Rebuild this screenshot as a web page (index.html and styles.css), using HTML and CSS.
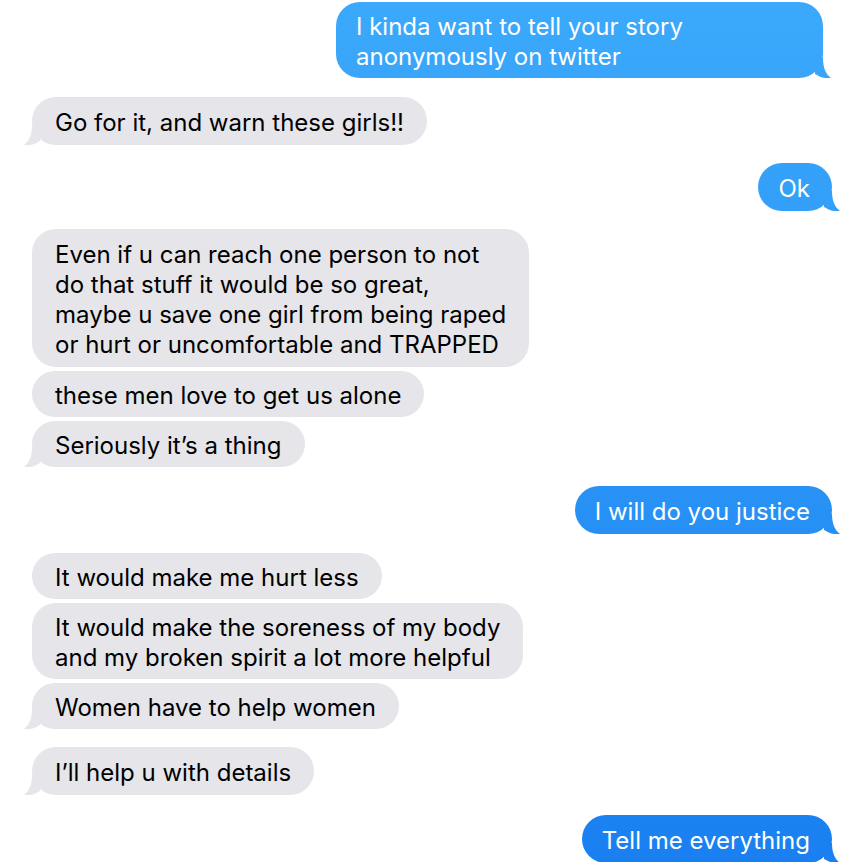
FILE: index.html
```html
<!DOCTYPE html>
<html>
<head>
<meta charset="utf-8">
<link rel="stylesheet" href="styles.css">
</head>
<body>
<div class="chat">
  <div class="msg me tail first">I kinda want to tell your story<br>anonymously on twitter</div>
  <div class="msg them tail tall gap15">Go for it, and warn these girls!!</div>
  <div class="msg me tail tall gap14">Ok</div>
  <div class="msg them tall gap14">Even if u can reach one person to not<br>do that stuff it would be so great,<br>maybe u save one girl from being raped<br>or hurt or uncomfortable and TRAPPED</div>
  <div class="msg them">these men love to get us alone</div>
  <div class="msg them tail">Seriously it’s a thing</div>
  <div class="msg me tail tall gap15">I will do you justice</div>
  <div class="msg them gap15">It would make me hurt less</div>
  <div class="msg them">It would make the soreness of my body<br>and my broken spirit a lot more helpful</div>
  <div class="msg them tail">Women have to help women</div>
  <div class="msg them tail tall gap14">I’ll help u with details</div>
  <div class="msg me tail tall gap16">Tell me everything</div>
</div>
</body>
</html>
```
FILE: styles.css
```css
html, body {
  margin: 0;
  padding: 0;
  background: #ffffff;
}
.chat {
  width: 862px;
  height: 862px;
  overflow: hidden;
  box-sizing: border-box;
  padding: 2px 30px 0 32px;
  display: flex;
  flex-direction: column;
  gap: 4px;
  font-family: "Inter", "Liberation Sans", Arial, sans-serif;
  font-size: 24px;
  line-height: 30px;
}
.msg {
  position: relative;
  white-space: nowrap;
  padding: 10px 23px 6px;
  border-radius: 24px;
}
.msg.tall { padding-top: 11px; padding-bottom: 7px; }
.gap14 { margin-top: 14px; }
.gap15 { margin-top: 15px; }
.gap16 { margin-top: 16px; }
.them {
  align-self: flex-start;
  background: #e5e5ea;
  color: #000;
}
.me {
  align-self: flex-end;
  color: #fff;
  background: linear-gradient(#3ba9fb, #1a80f1) fixed;
  padding-left: 20px;
  padding-right: 22px;
}
.me.first {
  width: 445px;
  margin-right: 9px;
}
.tail::after {
  content: "";
  position: absolute;
  bottom: 0;
  width: 16px;
  height: 20px;
}
.me.tail::after {
  right: -8px;
  background: linear-gradient(#3ba9fb, #1a80f1) fixed;
  clip-path: path("M0 0 H8 C8 9 10.5 16 16 20 C11 20.6 6 19.6 2 17 L0 16 Z");
}
.them.tail::after {
  left: -8px;
  background: #e5e5ea;
  clip-path: path("M16 0 H8 C8 9 5.5 16 0 20 C5 20.6 10 19.6 14 17 L16 16 Z");
}
```
